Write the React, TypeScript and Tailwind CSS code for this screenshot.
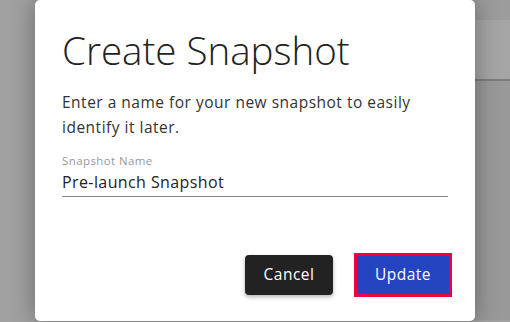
import React from 'react';

const App: React.FC = () => {
  return (
    <div className="relative w-[510px] h-[322px] overflow-hidden bg-[#a1a1a1]">
      {/* page behind the backdrop */}
      <div className="flex flex-col">
        <div className="h-[20px] bg-[#9c9c9c]" />
        <div className="h-[61px] bg-[#a5a5a5] border-b-2 border-[#7c7c7c]" />
        <div className="h-[239px] bg-[#999999]" />
      </div>
      <div className="absolute inset-y-0 left-0 w-[35px] bg-[#a1a1a1]" />

      {/* Dialog */}
      <div
        className="absolute left-[35px] top-0 w-[440px] h-[321px] bg-white rounded-[5px] shadow-[0_0_24px_rgba(0,0,0,0.35)] flex flex-col px-[27px]"
        style={{ fontFamily: '"Open Sans", sans-serif' }}
      >
        <h1 className="pt-[27px] text-[38.5px] leading-[46px] font-light text-[#222222]">
          Create Snapshot
        </h1>
        <p className="mt-[17px] text-[15.5px] leading-[25px] tracking-[0.5px] text-[#333333]">
          Enter a name for your new snapshot to easily identify it later.
        </p>
        <div className="mt-[14px] flex flex-col">
          <label className="text-[11.5px] leading-[14px] tracking-[0.4px] text-[#9a9a9a]">Snapshot Name</label>
          <div className="mt-[4px] pb-[4px] border-b border-[#8a8a8a] text-[16px] leading-[20px] tracking-[0.4px] text-[#222222]">
            Pre-launch Snapshot
          </div>
        </div>
        <div className="mt-auto mb-[24px] flex justify-end items-center gap-[21px] -mr-[4px]">
          <button className="w-[88px] h-[40px] rounded-[4px] bg-[#222222] text-white text-[15.5px] tracking-[0.5px] shadow-[0_2px_4px_rgba(0,0,0,0.3)]">
            Cancel
          </button>
          <button className="w-[98px] h-[44px] border-[3px] border-[#f0003a] bg-[#2444c2] text-white text-[15.5px] tracking-[0.5px]">
            Update
          </button>
        </div>
      </div>
    </div>
  );
};

export default App;
